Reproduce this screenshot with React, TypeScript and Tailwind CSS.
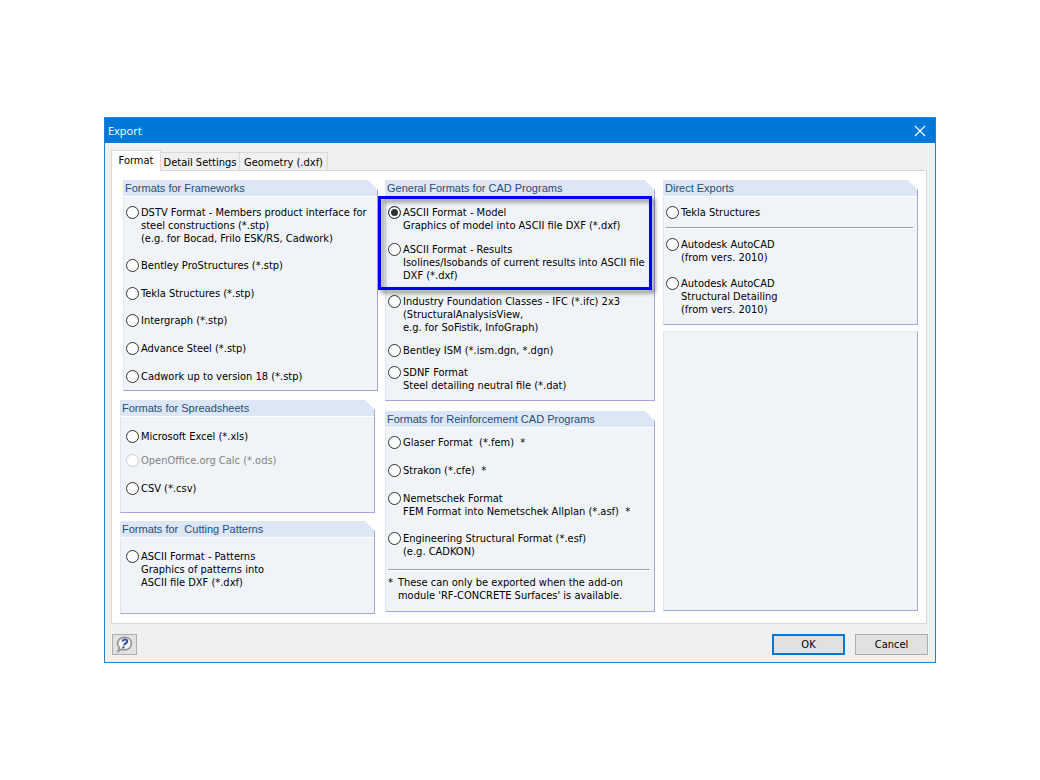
import React, { useState } from "react";

interface OptionProps {
    id: string;
    lines: string[];
    selected: string;
    onSelect: (id: string) => void;
    disabled?: boolean;
    className?: string;
}

// Radio button with a label that can run over a few lines
const Option: React.FC<OptionProps> = ({ id, lines, selected, onSelect, disabled, className = "" }) => (
    <div className={`flex items-start gap-[2px] ${className}`}>
        <input
            type="radio"
            name="format"
            id={id}
            checked={selected === id}
            disabled={disabled}
            onChange={() => onSelect(id)}
            className="size-[13px] shrink-0 appearance-none rounded-full border border-[#333333] bg-white checked:bg-[#333333] checked:shadow-[inset_0_0_0_2px_white] disabled:border-[#cccccc]"
        />
        <label htmlFor={id} className={disabled ? "text-[#838383]" : "text-black"}>
            {lines.map((line) => (
                <span key={line} className="block whitespace-pre">{line}</span>
            ))}
        </label>
    </div>
);

interface GroupProps {
    title: string;
    className?: string;
    bodyClass?: string;
    children: React.ReactNode;
}

const Group: React.FC<GroupProps> = ({ title, className = "", bodyClass = "", children }) => (
    <section className={className}>
        <h2 className="h-4 whitespace-pre border-r border-[#a5a5e6] bg-[#dce6f4] pl-[2px] font-['Liberation_Sans',Arial,sans-serif] text-[11px] leading-[16px] text-[#1f4e79] [clip-path:polygon(0_0,calc(100%_-_10px)_0,100%_10px,100%_100%,0_100%)]">
            {title}
        </h2>
        <div className="h-px border-r border-[#a5a5e6] bg-white" />
        <div className={`border-b border-l border-r border-b-[#a5a5e6] border-l-[#dce6f4] border-r-[#a5a5e6] bg-[#f0f4f9] ${bodyClass}`}>
            {children}
        </div>
    </section>
);

const Divider: React.FC<{ className: string }> = ({ className }) => (
    <div className={`mr-1 h-[2px] border-b border-t border-b-white border-t-[#a0a0a0] ${className}`} />
);

const App: React.FC = () => {
    const [selected, setSelected] = useState<string>("dxf-model");
    const radio = { selected, onSelect: setSelected };

    return (
        <main className="flex min-h-screen items-center justify-center bg-white">
            <div
                role="dialog"
                aria-label="Export"
                className="w-4/5 min-w-[820px] border border-[#1883d7] bg-[#f0f0f0] font-['DejaVu_Sans_Condensed',Tahoma,sans-serif] text-[11px] leading-[13px] text-black"
            >
                <header className="flex h-[25px] items-center justify-between bg-[#0078d7] pl-[3px] pr-[9px] text-white">
                    <h1 className="font-['Open_Sans','Segoe_UI',sans-serif] text-[11px]">Export</h1>
                    <button type="button" aria-label="Close">
                        <svg width="12" height="12" viewBox="0 0 12 12" stroke="white" strokeWidth="1.1">
                            <path d="M1 1L11 11M11 1L1 11" />
                        </svg>
                    </button>
                </header>

                <div role="tablist" className="flex h-[27px] items-end pl-[6px] pt-[7px]">
                    <button type="button" role="tab" aria-selected="true" className="relative -mb-px h-[21px] w-[50px] border border-b-0 border-[#d9d9d9] bg-white pb-[2px]">
                        Format
                    </button>
                    <button type="button" role="tab" aria-selected="false" className="h-[18px] w-[79px] border border-b-0 border-l-0 border-[#d9d9d9] pt-[2px]">
                        Detail Settings
                    </button>
                    <button type="button" role="tab" aria-selected="false" className="h-[18px] w-[88px] border border-b-0 border-l-0 border-[#d9d9d9] pt-[2px]">
                        Geometry (.dxf)
                    </button>
                </div>

                <div role="tabpanel" className="ml-[6px] mr-2 grid grid-cols-[257fr_270fr_255fr] gap-x-2 border border-[#d9d9d9] bg-white px-2 py-[9px]">
                    <div>
                        <Group title="Formats for Frameworks" className="-mr-px ml-[3px]" bodyClass="pl-[2px] pt-[9px] pb-[7px]">
                            <Option {...radio} id="dstv" lines={["DSTV Format - Members product interface for", "steel constructions (*.stp)", "(e.g. for Bocad, Frilo ESK/RS, Cadwork)"]} />
                            <Option {...radio} id="prostructures" className="mt-[14px]" lines={["Bentley ProStructures (*.stp)"]} />
                            <Option {...radio} id="tekla-stp" className="mt-[15px]" lines={["Tekla Structures (*.stp)"]} />
                            <Option {...radio} id="intergraph" className="mt-[14px]" lines={["Intergraph (*.stp)"]} />
                            <Option {...radio} id="advance-steel" className="mt-[15px]" lines={["Advance Steel (*.stp)"]} />
                            <Option {...radio} id="cadwork" className="mt-[15px]" lines={["Cadwork up to version 18 (*.stp)"]} />
                        </Group>
                        <Group title="Formats for Spreadsheets" className="mr-[2px] mt-[9px]" bodyClass="pl-[5px] pt-[13px] pb-[17px]">
                            <Option {...radio} id="excel" lines={["Microsoft Excel (*.xls)"]} />
                            <Option {...radio} id="openoffice" disabled className="mt-[11px]" lines={["OpenOffice.org Calc (*.ods)"]} />
                            <Option {...radio} id="csv" className="mt-[15px]" lines={["CSV (*.csv)"]} />
                        </Group>
                        <Group title="Formats for  Cutting Patterns" className="mr-[2px] mt-2" bodyClass="pl-[5px] pt-3 pb-6">
                            <Option {...radio} id="dxf-patterns" lines={["ASCII Format - Patterns", "Graphics of patterns into", "ASCII file DXF (*.dxf)"]} />
                        </Group>
                    </div>

                    <div>
                        <Group title="General Formats for CAD Programs" bodyClass="pl-[2px] pt-[9px] pb-2">
                            <div className="relative">
                                <Option {...radio} id="dxf-model" lines={["ASCII Format - Model", "Graphics of model into ASCII file DXF (*.dxf)"]} />
                                <Option {...radio} id="dxf-results" className="mt-[11px]" lines={["ASCII Format - Results", "Isolines/Isobands of current results into ASCII file", "DXF (*.dxf)"]} />
                                {/* marker frame round the two DXF options */}
                                <div className="pointer-events-none absolute -bottom-2 -left-[10px] -top-[10px] right-[2px] border-3 border-[#0000ff] drop-shadow-[3px_3px_2px_rgba(0,0,0,0.5)]" />
                            </div>
                            <Option {...radio} id="ifc" className="mt-[13px]" lines={["Industry Foundation Classes - IFC (*.ifc) 2x3", "(StructuralAnalysisView,", "e.g. for SoFistik, InfoGraph)"]} />
                            <Option {...radio} id="ism" className="mt-[10px]" lines={["Bentley ISM (*.ism.dgn, *.dgn)"]} />
                            <Option {...radio} id="sdnf" className="mt-[9px]" lines={["SDNF Format", "Steel detailing neutral file (*.dat)"]} />
                        </Group>
                        <Group title="Formats for Reinforcement CAD Programs" className="mt-[10px]" bodyClass="pl-[2px] pt-2 pb-[9px]">
                            <Option {...radio} id="glaser" lines={["Glaser Format  (*.fem)  *"]} />
                            <Option {...radio} id="strakon" className="mt-[15px]" lines={["Strakon (*.cfe)  *"]} />
                            <Option {...radio} id="nemetschek" className="mt-[15px]" lines={["Nemetschek Format", "FEM Format into Nemetschek Allplan (*.asf)  *"]} />
                            <Option {...radio} id="esf" className="mt-[14px]" lines={["Engineering Structural Format (*.esf)", "(e.g. CADKON)"]} />
                            <Divider className="mt-[11px]" />
                            <div className="mt-[5px] flex gap-[5px]">
                                <span>*</span>
                                <p>
                                    These can only be exported when the add-on<br />
                                    module 'RF-CONCRETE Surfaces' is available.
                                </p>
                            </div>
                        </Group>
                    </div>

                    <div className="flex flex-col">
                        <Group title="Direct Exports" bodyClass="pl-[2px] pt-[9px] pb-2">
                            <Option {...radio} id="tekla" lines={["Tekla Structures"]} />
                            <Divider className="mt-2" />
                            <Option {...radio} id="autocad" className="mt-[9px]" lines={["Autodesk AutoCAD", "(from vers. 2010)"]} />
                            <Option {...radio} id="autocad-sd" className="mt-[13px]" lines={["Autodesk AutoCAD", "Structural Detailing", "(from vers. 2010)"]} />
                        </Group>
                        <div className="mb-[3px] mt-[6px] flex-1 border border-b-[#a5a5e6] border-l-[#dce6f4] border-r-[#a5a5e6] border-t-[#dce6f4] bg-[#f0f4f9]" />
                    </div>
                </div>

                <footer className="flex items-center gap-[10px] px-[7px] pb-[7px] pt-[10px]">
                    <button type="button" aria-label="Help" className="mr-auto flex h-[21px] w-[25px] items-center justify-center border border-[#adadad] bg-[#e1e1e1]">
                        <svg width="17" height="17" viewBox="0 0 17 17" fill="none">
                            <path d="M8.5 1.3C12.6 1.3 15.4 4 15.4 7.6S12.4 13.8 8.5 13.8C7.4 13.8 6.4 13.6 5.5 13.2L2.2 15.2L3.4 11.8C2.2 10.7 1.6 9.3 1.6 7.6C1.6 4 4.5 1.3 8.5 1.3Z" fill="#f6f6f6" stroke="#969696" strokeWidth="1.7" />
                            <path d="M6.4 5.5C6.9 4.2 7.9 3.6 9.1 3.6C10.6 3.6 11.4 4.4 11.1 5.7C10.7 7.4 8.5 7.4 8 9.3" stroke="#34519f" strokeWidth="2" />
                            <path d="M7.6 10.4L7.2 12.4" stroke="#34519f" strokeWidth="2.2" />
                        </svg>
                    </button>
                    <button type="button" className="h-[21px] w-[73px] border-2 border-[#0078d7] bg-[#e1e1e1]">OK</button>
                    <button type="button" className="h-[21px] w-[73px] border border-[#adadad] bg-[#e1e1e1]">Cancel</button>
                </footer>
            </div>
        </main>
    );
};

export default App;
